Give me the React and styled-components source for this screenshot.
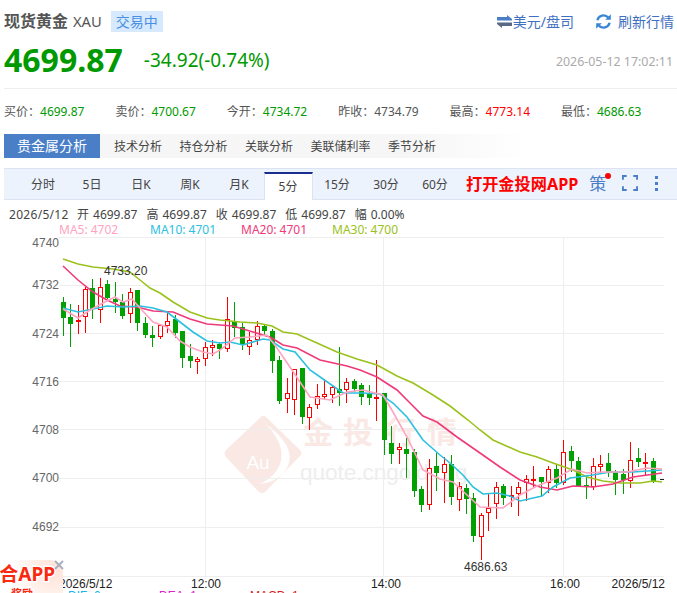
import React from "react";
import styled, { createGlobalStyle } from "styled-components";

const GlobalStyle = createGlobalStyle`
  html, body { margin: 0; padding: 0; background: #fff; overflow: hidden; }
  body { font-family: "Noto Sans", "Noto Sans CJK SC", sans-serif; }
`;

const GREEN = "#009900";
const PINK = "#ffa4c0";
const CYAN = "#2cc0df";
const ROSE = "#f0397a";
const OLIVE = "#9bc21c";

const Page = styled.div`
  position: relative;
  width: 677px;
  height: 593px;
  overflow: hidden;
`;

const TitleRow = styled.div`
  display: flex;
  align-items: center;
  height: 42px;
  padding: 0 3px 0 4px;
`;

const Title = styled.span`
  font-size: 16px;
  font-weight: 700;
  color: #555;
  line-height: 22px;
`;

const Code = styled.span`
  font-size: 14.7px;
  color: #555;
  margin-left: 5px;
`;

const Badge = styled.span`
  width: 52px;
  height: 21px;
  margin-left: 9px;
  background: #d6e9fd;
  color: #4a90e2;
  font-size: 14px;
  line-height: 21px;
  text-align: center;
`;

const Action = styled.span`
  display: flex;
  align-items: center;
  gap: ${(p) => p.$gap}px;
  margin-left: ${(p) => (p.$first ? "auto" : "21px")};
  color: #3f6fbf;
  font-size: 14px;
`;

const PriceRow = styled.div`
  display: flex;
  align-items: center;
  height: 36px;
  padding: 0 4px;
`;

const Price = styled.span`
  font-size: 32px;
  font-weight: 700;
  color: ${GREEN};
  line-height: 36px;
`;

const Change = styled.span`
  font-size: 19px;
  color: ${GREEN};
  margin-left: 21px;
`;

const Stamp = styled.span`
  margin-left: auto;
  font-size: 12.4px;
  color: #aaa;
  padding-top: 2px;
`;

const StatRow = styled.div`
  display: grid;
  grid-template-columns: repeat(6, 111.4px);
  align-items: center;
  box-sizing: border-box;
  height: 46px;
  padding-bottom: 2px;
  margin: 10px 0 0 4px;
  border-top: 1px solid #eee;
  font-size: 12px;
  color: #555;
`;

const StatValue = styled.span`
  color: ${(p) => p.$color};
`;

const AnalysisTabs = styled.div`
  display: flex;
  align-items: center;
  height: 24px;
  margin-left: 4px;
  background: linear-gradient(90deg, #f6f6f6 60%, #ffffff 78%);
`;

const AnalysisTab = styled.span`
  font-size: 12px;
  color: #444;
  margin-right: 17.5px;
`;

const ActiveAnalysis = styled.span`
  width: 96px;
  height: 24px;
  margin-right: 14px;
  background: #4a7fc7;
  color: #fff;
  font-size: 14px;
  line-height: 24px;
  text-align: center;
`;

const PeriodBar = styled.div`
  display: flex;
  align-items: flex-end;
  height: 30px;
  margin: 10px 0 0 4px;
  padding-left: 14.5px;
  background: #edf3fc;
  border-top: 1px solid #dbe4f2;
  border-bottom: 1px solid #dbe4f2;
`;

const Period = styled.span`
  width: 49px;
  height: 30px;
  font-size: 12px;
  line-height: 32px;
  color: #444;
  text-align: center;
`;

const ActivePeriod = styled(Period)`
  box-sizing: border-box;
  height: 28px;
  line-height: 25px;
  margin-bottom: -1px;
  background: #fff;
  border-top: 2px solid #1a2f8c;
  border-left: 1px solid #dbe4f2;
  border-right: 1px solid #dbe4f2;
`;

const AppLink = styled.span`
  margin-left: 6.5px;
  height: 30px;
  line-height: 30px;
  color: #ff0000;
  font-size: 16.2px;
  font-weight: 700;
`;

const Strategy = styled.span`
  position: relative;
  margin-left: 11px;
  height: 30px;
  line-height: 30px;
  color: #4a7fc7;
  font-size: 17px;
`;

const RedDot = styled.i`
  position: absolute;
  right: -5px;
  top: 4px;
  width: 6px;
  height: 6px;
  border-radius: 50%;
  background: #f00;
`;

const ToolIcon = styled.svg`
  display: block;
  flex: none;
  align-self: center;
  margin-left: ${(p) => p.$left}px;
  margin-bottom: 2px;
`;

const OhlcRow = styled.div`
  display: flex;
  gap: 9px;
  height: 15px;
  margin: 7px 0 0 9px;
  font-size: 12px;
  line-height: 15px;
  color: #444;
`;

const OhlcDate = styled.span`
  width: 59px;
  letter-spacing: 0.3px;
`;

const OhlcItem = styled.span`
  display: flex;
  gap: 4px;
`;

const MaRow = styled.div`
  display: grid;
  grid-template-columns: repeat(4, 91px);
  height: 14px;
  padding-left: 59px;
  font-size: 12px;
  line-height: 15px;
`;

const MaLabel = styled.span`
  color: ${(p) => p.$color};
`;

const Chart = styled.svg`
  display: block;
  width: 677px;
  height: 353px;
`;

const Legend = styled.div`
  display: grid;
  grid-template-columns: repeat(3, 91px);
  padding-left: 68px;
  font-family: "Liberation Sans", sans-serif;
  font-size: 12px;
  line-height: 14px;
`;

const LegendItem = styled.span`
  color: ${(p) => p.$color};
`;

const FloatAd = styled.div`
  position: absolute;
  left: 0;
  bottom: 0;
  width: 63px;
  height: 33px;
  overflow: hidden;
  border-top-right-radius: 12px;
  background: radial-gradient(circle at 85% 30%, #ffe3d8 0, #fff0ea 40%, #fff 75%);
`;

const AdLine = styled.div`
  position: absolute;
  right: ${(p) => p.$right}px;
  top: ${(p) => p.$top}px;
  white-space: nowrap;
  font-size: ${(p) => p.$size}px;
  font-weight: 700;
  line-height: 20px;
  color: #fa2a10;
  paint-order: stroke;
  -webkit-text-stroke: 3px #fff;
`;

const AdClose = styled.svg`
  position: absolute;
  left: 54px;
  top: 560px;
`;

// [high, body top, body bottom, low, colour]
const candles = [
  [297.3, 302, 317.7, 336, "g"], [304.3, 317, 324, 346.7, "g"], [305, 320, 321, 333.7, "r"],
  [287.3, 289.3, 316.7, 332.7, "r"], [279, 288.3, 309, 319, "g"], [278, 287.3, 309, 323.3, "r"],
  [280, 284.3, 298.3, 299.3, "g"], [282.3, 299, 302, 313, "g"], [294.3, 301.7, 316, 319, "g"],
  [287.7, 292.3, 313.7, 323.3, "r"], [290, 290, 322.7, 331, "g"], [317.3, 323, 335, 337.7, "g"],
  [326.3, 335, 337.7, 346.7, "g"], [323.7, 325.3, 336.3, 339, "r"], [313, 321.3, 325.3, 333, "r"],
  [315, 319.3, 332.7, 338.3, "g"], [331, 331, 357.7, 368.3, "g"], [343.7, 356, 360.7, 367.7, "g"],
  [357, 359, 361.7, 374.3, "r"], [341.7, 347.3, 358.3, 365.7, "r"], [340.3, 345, 347.7, 355.7, "r"],
  [343, 343.7, 349, 359, "g"], [297.3, 319.3, 348.3, 352.3, "r"], [302, 321.7, 327.7, 336.7, "g"],
  [323, 327.3, 344, 350, "g"], [331.7, 340.7, 346.3, 355, "r"], [321, 326.3, 339.7, 345, "r"],
  [324, 326, 330.7, 335, "g"], [329, 331, 360.7, 372.7, "g"], [356, 360, 400.7, 404, "g"],
  [378.3, 393.3, 398.3, 412.7, "r"], [369.3, 369.3, 399.3, 415, "r"], [368, 368, 416.7, 424, "g"],
  [404, 407.3, 417.3, 430, "r"], [384, 396.7, 404.3, 409.3, "r"], [379, 394.7, 396.7, 400, "r"],
  [385, 387.7, 394.7, 402.7, "r"], [347.3, 389.3, 392.7, 406, "g"], [378.3, 382.3, 389.3, 402.7, "r"],
  [379.3, 381.3, 389.3, 392, "g"], [382.7, 385.3, 396.7, 405, "g"], [385, 394.3, 397.7, 405, "g"],
  [360, 397, 398.5, 420.7, "r"], [393.3, 393.3, 440, 455, "g"], [426, 443.3, 454, 464, "g"],
  [443.3, 447.3, 449.7, 464, "r"], [438, 449.3, 454, 478.3, "g"], [449.3, 451.7, 490.7, 496.7, "g"],
  [486, 489.3, 505, 511.7, "g"], [459.3, 468.3, 504.7, 510, "r"], [452.7, 466, 472.7, 490.7, "g"],
  [456.7, 464, 472.7, 503.3, "r"], [455, 464, 496.7, 505, "g"], [482.3, 486.3, 499.3, 510.7, "r"],
  [484, 488.3, 499, 514.3, "g"], [493.3, 498, 535.7, 542.3, "g"], [512.7, 515.3, 536.3, 560, "r"],
  [493, 508.3, 512.3, 530.7, "r"], [482.3, 487.7, 503.3, 518.7, "r"], [484.3, 486, 498, 505, "g"],
  [486, 495, 496.7, 506.7, "r"], [481.7, 487.3, 493.3, 516, "r"], [475, 479.3, 482.3, 501, "r"],
  [465.7, 479, 480, 486.7, "r"], [477.3, 477.3, 482, 496, "g"], [466, 469.3, 482.7, 493.3, "r"],
  [465, 469.3, 482.7, 488.3, "g"], [440, 452.3, 482.3, 485, "r"], [446, 451.3, 460.7, 471.7, "g"],
  [456.7, 461.3, 486, 486.7, "g"], [475, 485, 487.3, 499.3, "g"], [457.7, 466.3, 486.7, 490, "r"],
  [455, 464.3, 466.3, 472.7, "r"], [453.3, 463.3, 473.3, 477.3, "g"], [470, 472.3, 480, 495, "g"],
  [469.3, 474, 480, 494, "g"], [442.3, 460.7, 480.7, 488, "r"], [448.3, 458.3, 461.7, 466.7, "g"],
  [453.3, 462.3, 463, 476, "r"], [458.3, 461.3, 481.3, 483, "g"],
];

const ma5 = "63,309 78,318 90,310 103,303 115,297 123,302 132,299 140,308 153,322 167,327 180,341 190,347 203,352 213,354 220,350 235,338 250,337 267,335 277,348 292,370 310,397 330,400 347,392 363,390 383,395 393,412 407,437 423,470 440,479 453,482 467,495 480,507 503,508 520,495 537,486 557,478 572,469 587,473 603,472 627,472 647,468 662,469";
const ma10 = "63,308 78,312 93,309 107,306 123,307 140,306 153,308 167,312 180,322 193,332 207,341 220,343 230,342 243,345 263,339 270,340 283,349 295,352 310,370 323,379 343,393 363,393 380,394 393,403 407,417 423,440 440,455 450,463 463,475 473,487 483,494 497,493 510,496 520,501 542,496 553,487 570,478 593,475 610,472 633,472 662,470";
const ma20 = "63,266 78,280 93,292 107,300 120,306 137,307 153,311 173,312 190,319 207,324 220,325 233,326 253,332 270,337 283,345 297,348 320,360 347,366 360,370 377,377 397,390 410,403 423,416 437,422 457,437 480,453 500,467 520,480 540,487 557,490 573,486 593,487 613,484 633,477 662,473";
const ma30 = "63,259 78,264 93,267 113,269 130,272 140,280 150,288 160,293 173,302 190,312 207,318 220,320 240,322 257,323 272,326 283,332 297,334 317,343 337,352 357,359 377,365 397,376 413,383 433,395 450,406 468,420 480,430 493,440 520,452 537,457 553,463 573,470 587,477 603,481 620,483 640,483 653,481 662,482";

const axis = [
  ["4740", 247], ["4732", 289], ["4724", 337.5], ["4716", 385.5],
  ["4708", 434], ["4700", 482], ["4692", 531],
];

const times = [["12:00", 206], ["14:00", 386], ["16:00", 565]];

const stats = [
  ["买价", "4699.87", GREEN], ["卖价", "4700.67", GREEN], ["今开", "4734.72", GREEN],
  ["昨收", "4734.79", "#555"], ["最高", "4773.14", "#f00"], ["最低", "4686.63", GREEN],
];

const ohlc = [["开", "4699.87"], ["高", "4699.87"], ["收", "4699.87"], ["低", "4699.87"], ["幅", "0.00%"]];

const svgText = { fontFamily: "Liberation Sans, sans-serif", fontSize: 12 };

function Candle({ c, i }) {
  const x = Math.round(62.6 + 7.47 * i) + 0.5;
  const [hi, top, bot, lo, dir] = c;
  const color = dir === "r" ? "#f00" : "#00a000";
  return (
    <g shapeRendering="crispEdges">
      <line x1={x} x2={x} y1={hi} y2={lo} stroke={color} />
      {dir === "r" ? (
        <rect x={x - 2} y={top} width={4} height={Math.max(bot - top, 1)} fill="#fff" stroke={color} />
      ) : (
        <rect x={x - 2.5} y={top} width={5} height={bot - top} fill={color} />
      )}
    </g>
  );
}

function Watermark() {
  return (
    <g>
      <path
        d="M262 416 Q264 415 266 417 L300 450 Q303 453 300 456 L266 491 Q262 495 258 491 L226 457 Q223 453 226 450 Z"
        fill="#f9e8e4"
      />
      <path d="M266 424 Q290 450 277 470 Q270 480 259 484 Q280 482 288 466 Q296 446 266 424 Z" fill="#fff" />
      <text x={258} y={469} textAnchor="middle" fill="#fff" fontFamily="Liberation Sans, sans-serif" fontSize={19}>
        Au
      </text>
      <text
        x="303 343 386 427"
        y={443}
        fill="#f9e8e4"
        fontFamily="Noto Sans CJK SC, sans-serif"
        fontWeight={700}
        fontSize={30}
      >
        金投行情
      </text>
      <text x={300} y={480} fill="#eeeeee" fontFamily="Liberation Sans, sans-serif" fontSize={22.5}>
        quote.cngold.org
      </text>
    </g>
  );
}

function KlineChart() {
  return (
    <Chart viewBox="0 236 677 353">
      <Watermark />
      <g stroke="#eeeeee" shapeRendering="crispEdges">
        {[237, 285, 333, 381, 429, 478, 527, 576].map((y) => (
          <line key={y} x1={59} x2={664} y1={y + 0.5} y2={y + 0.5} />
        ))}
        {[206, 384, 564].map((x) => (
          <line key={x} x1={x - 0.5} x2={x - 0.5} y1={237} y2={576} />
        ))}
      </g>
      {axis.map(([label, y]) => (
        <text key={label} x={59} y={y} textAnchor="end" fill="#666" {...svgText}>
          {label}
        </text>
      ))}
      {candles.map((c, i) => (
        <Candle key={i} c={c} i={i} />
      ))}
      <line x1={660} x2={664} y1={479.5} y2={479.5} stroke="#222" shapeRendering="crispEdges" />
      <polyline points={ma30} fill="none" stroke={OLIVE} strokeWidth={1.6} />
      <polyline points={ma20} fill="none" stroke={ROSE} strokeWidth={1.6} />
      <polyline points={ma10} fill="none" stroke={CYAN} strokeWidth={1.6} />
      <polyline points={ma5} fill="none" stroke={PINK} strokeWidth={1.6} />
      <text x={104} y={275} fill="#333" {...svgText}>4733.20</text>
      <text x={464} y={571} fill="#333" {...svgText}>4686.63</text>
      <text x={59} y={588} fill="#222" {...svgText}>2026/5/12</text>
      {times.map(([t, x]) => (
        <text key={t} x={x} y={588} textAnchor="middle" fill="#222" {...svgText}>
          {t}
        </text>
      ))}
      <text x={665} y={588} textAnchor="end" fill="#222" {...svgText}>2026/5/12</text>
    </Chart>
  );
}

export default function App() {
  return (
    <Page>
      <GlobalStyle />
      <TitleRow>
        <Title>现货黄金</Title>
        <Code>XAU</Code>
        <Badge>交易中</Badge>
        <Action $first $gap={1}>
          <svg width="15" height="13" viewBox="0 0 15 13">
            <path d="M0 2h10V0l5 4v1.6H0z" fill="#4a7fc7" />
            <path d="M15 7.6H0v1.4l5 4v-2h10z" fill="#586a86" />
          </svg>
          美元/盘司
        </Action>
        <Action $gap={6}>
          <svg width="17" height="17" viewBox="0 0 17 17" fill="none">
            <path d="M2.4 7.2A6.2 6.2 0 0 1 13.2 4.6" stroke="#3a86d6" strokeWidth="2.4" />
            <path d="M14.6 9.8A6.2 6.2 0 0 1 3.8 12.4" stroke="#3a86d6" strokeWidth="2.4" />
            <path d="M15.8 1.2v5.6h-5.6z" fill="#3a86d6" />
            <path d="M1.2 15.8v-5.6h5.6z" fill="#3a86d6" />
          </svg>
          刷新行情
        </Action>
      </TitleRow>
      <PriceRow>
        <Price>4699.87</Price>
        <Change>-34.92(-0.74%)</Change>
        <Stamp>2026-05-12 17:02:11</Stamp>
      </PriceRow>
      <StatRow>
        {stats.map(([label, value, color]) => (
          <span key={label}>
            {label}：<StatValue $color={color}>{value}</StatValue>
          </span>
        ))}
      </StatRow>
      <AnalysisTabs>
        <ActiveAnalysis>贵金属分析</ActiveAnalysis>
        {["技术分析", "持仓分析", "关联分析", "美联储利率", "季节分析"].map((t) => (
          <AnalysisTab key={t}>{t}</AnalysisTab>
        ))}
      </AnalysisTabs>
      <PeriodBar>
        {["分时", "5日", "日K", "周K", "月K"].map((t) => (
          <Period key={t}>{t}</Period>
        ))}
        <ActivePeriod>5分</ActivePeriod>
        {["15分", "30分", "60分"].map((t) => (
          <Period key={t}>{t}</Period>
        ))}
        <AppLink>打开金投网APP</AppLink>
        <Strategy>
          策<RedDot />
        </Strategy>
        <ToolIcon $left={16} width="16" height="16" viewBox="0 0 17 17" fill="none" stroke="#4a7fc7" strokeWidth="2">
          <path d="M1 5V1h4M12 1h4v4M16 12v4h-4M5 16H1v-4" />
        </ToolIcon>
        <ToolIcon $left={17} width="4" height="15" viewBox="0 0 4 15" fill="#4a7fc7">
          <rect x="0" y="0" width="3" height="3" />
          <rect x="0" y="6" width="3" height="3" />
          <rect x="0" y="12" width="3" height="3" />
        </ToolIcon>
      </PeriodBar>
      <OhlcRow>
        <OhlcDate>2026/5/12</OhlcDate>
        {ohlc.map(([k, v]) => (
          <OhlcItem key={k}>
            {k}
            <span>{v}</span>
          </OhlcItem>
        ))}
      </OhlcRow>
      <MaRow>
        <MaLabel $color={PINK}>MA5: 4702</MaLabel>
        <MaLabel $color={CYAN}>MA10: 4701</MaLabel>
        <MaLabel $color={ROSE}>MA20: 4701</MaLabel>
        <MaLabel $color={OLIVE}>MA30: 4700</MaLabel>
      </MaRow>
      <KlineChart />
      <Legend>
        <LegendItem $color="#1ab6e8">DIF: 0</LegendItem>
        <LegendItem $color="#e020c8">DEA: 1</LegendItem>
        <LegendItem $color="#d81e1e">MACD: 1</LegendItem>
      </Legend>
      <FloatAd>
        <AdLine $right={8} $top={4} $size={19}>联合APP</AdLine>
        <AdLine $right={30} $top={24} $size={11}>奖励</AdLine>
      </FloatAd>
      <AdClose width="10" height="10" viewBox="0 0 10 10">
        <path d="M1 1l8 8M9 1l-8 8" stroke="#a9b0bd" strokeWidth="2" />
      </AdClose>
    </Page>
  );
}
